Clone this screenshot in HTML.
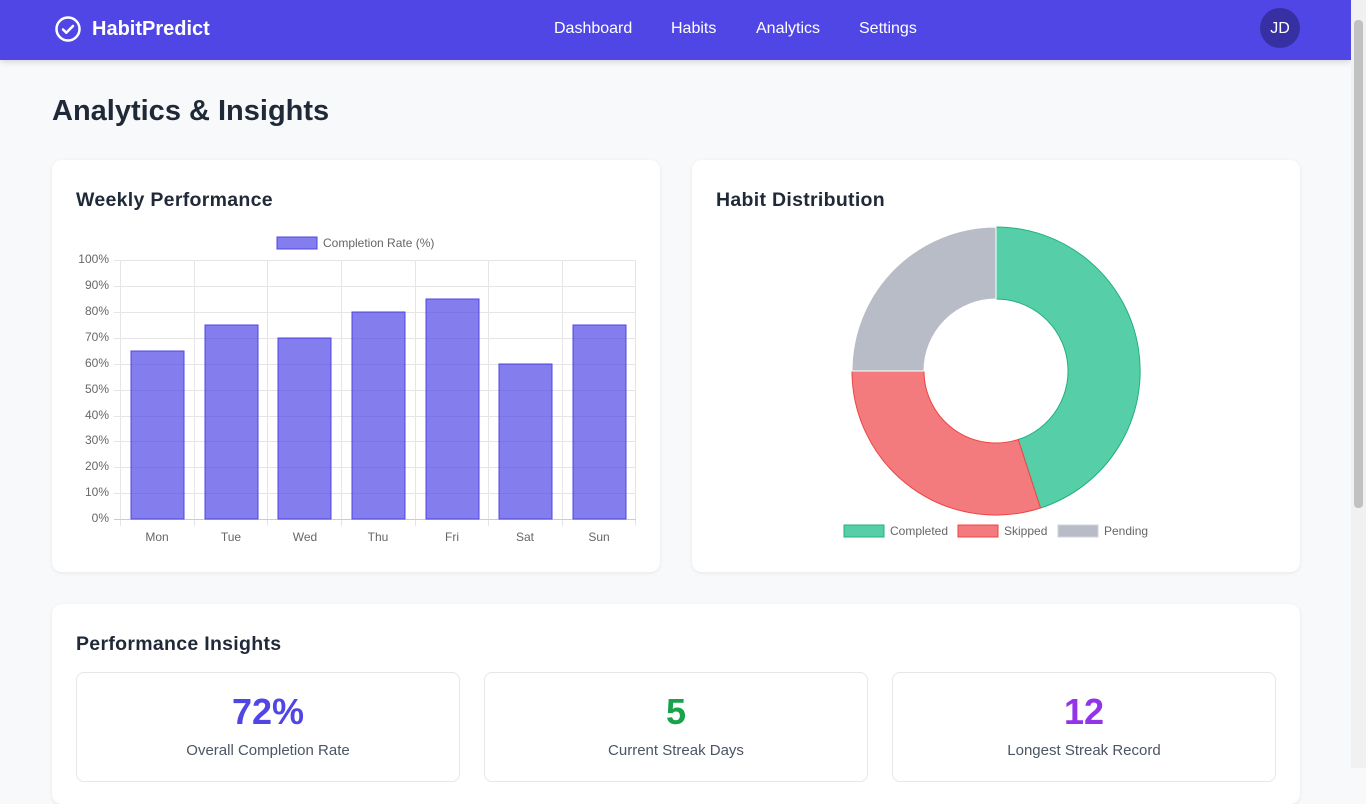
<!DOCTYPE html>
<html><head><meta charset="utf-8"><style>
*{box-sizing:border-box;margin:0;padding:0}
body{width:1366px;height:768px;overflow:hidden;background:#f8f9fb;font-family:"Liberation Sans","DejaVu Sans",sans-serif;color:#1f2937;position:relative}
.nav{position:absolute;left:0;top:0;width:1351px;height:60px;background:#4f46e5;box-shadow:0 2px 6px rgba(0,0,0,.15)}
.logo{position:absolute;left:92px;top:18px;color:#fff;font-weight:bold;font-size:20px}
.links a{position:absolute;top:20px;color:#fff;font-size:16px;text-decoration:none}
.av{position:absolute;left:1260px;top:8px;width:40px;height:40px;border-radius:50%;background:#3730a3;color:#fff;font-size:16px;text-align:center;line-height:42px}
.sb{position:absolute;left:1351px;top:0;width:15px;height:768px;background:#f1f1f1}
.sb div{position:absolute;left:3px;top:20px;width:9px;height:488px;background:#c1c1c1;border-radius:4px}
h1{position:absolute;left:52px;top:95px;font-size:29px;font-weight:bold;color:#1f2937}
.card{position:absolute;background:#fff;border-radius:10px;box-shadow:0 1px 4px rgba(0,0,0,.08)}
.card h2{position:absolute;left:24px;top:29px;font-size:19.5px;font-weight:bold;color:#1f2937;letter-spacing:.3px}
.st{position:absolute;top:672px;width:384px;height:110px;border:1px solid #e5e7eb;border-radius:8px;background:#fff;text-align:center}
.st b{display:block;margin-top:18px;font-size:36px;font-weight:bold}
.st span{display:block;margin-top:9px;font-size:15px;color:#4b5563}
svg text{font-family:"Liberation Sans",sans-serif}
</style></head><body>
<div class="nav">
<svg style="position:absolute;left:54px;top:15px" width="28" height="28" viewBox="0 0 28 28"><circle cx="14" cy="14" r="11.5" fill="none" stroke="#fff" stroke-width="2.5"/><path d="M9 14.5l3.3 3.2L19 11" fill="none" stroke="#fff" stroke-width="2.5" stroke-linecap="round" stroke-linejoin="round"/></svg>
<div class="logo">HabitPredict</div>
<div class="links"><a style="left:554px">Dashboard</a><a style="left:671px">Habits</a><a style="left:756px">Analytics</a><a style="left:859px">Settings</a></div>
<div class="av">JD</div>
</div>
<div class="sb"><div></div></div>
<h1>Analytics &amp; Insights</h1>
<div class="card" style="left:52px;top:160px;width:608px;height:412px"><h2>Weekly Performance</h2></div>
<div class="card" style="left:692px;top:160px;width:608px;height:412px"><h2>Habit Distribution</h2></div>
<div class="card" style="left:52px;top:604px;width:1248px;height:200px"><h2>Performance Insights</h2></div>
<svg style="position:absolute;left:0;top:0" width="1366" height="768">
<g stroke="#e5e5e5" stroke-width="1">
<line x1="114" y1="260.5" x2="636" y2="260.5"/><line x1="114" y1="286.5" x2="636" y2="286.5"/><line x1="114" y1="312.5" x2="636" y2="312.5"/><line x1="114" y1="338.5" x2="636" y2="338.5"/><line x1="114" y1="364.5" x2="636" y2="364.5"/><line x1="114" y1="390.5" x2="636" y2="390.5"/><line x1="114" y1="416.5" x2="636" y2="416.5"/><line x1="114" y1="441.5" x2="636" y2="441.5"/><line x1="114" y1="467.5" x2="636" y2="467.5"/><line x1="114" y1="493.5" x2="636" y2="493.5"/>
<line x1="120.5" y1="260" x2="120.5" y2="526"/><line x1="194.5" y1="260" x2="194.5" y2="526"/><line x1="267.5" y1="260" x2="267.5" y2="526"/><line x1="341.5" y1="260" x2="341.5" y2="526"/><line x1="415.5" y1="260" x2="415.5" y2="526"/><line x1="488.5" y1="260" x2="488.5" y2="526"/><line x1="562.5" y1="260" x2="562.5" y2="526"/><line x1="635.5" y1="260" x2="635.5" y2="526"/>
</g>
<line x1="114" y1="519.5" x2="636" y2="519.5" stroke="#ccc"/>
<g fill="rgba(79,70,229,0.7)" stroke="#4f46e5" stroke-width="1">
<rect x="131" y="351" width="53" height="168"/><rect x="205" y="325" width="53" height="194"/><rect x="278" y="338" width="53" height="181"/><rect x="352" y="312" width="53" height="207"/><rect x="426" y="299" width="53" height="220"/><rect x="499" y="364" width="53" height="155"/><rect x="573" y="325" width="53" height="194"/>
</g>
<rect x="277" y="237" width="40" height="12" fill="rgba(79,70,229,0.7)" stroke="#4f46e5"/>
<g font-size="12" fill="#666">
<text x="323" y="247">Completion Rate (%)</text>
<g text-anchor="end"><text x="109" y="263">100%</text><text x="109" y="289">90%</text><text x="109" y="315">80%</text><text x="109" y="341">70%</text><text x="109" y="367">60%</text><text x="109" y="393">50%</text><text x="109" y="419">40%</text><text x="109" y="444">30%</text><text x="109" y="470">20%</text><text x="109" y="496">10%</text><text x="109" y="522">0%</text></g>
<g text-anchor="middle"><text x="157" y="541">Mon</text><text x="231" y="541">Tue</text><text x="305" y="541">Wed</text><text x="378" y="541">Thu</text><text x="452" y="541">Fri</text><text x="525" y="541">Sat</text><text x="599" y="541">Sun</text></g>
</g>
<path d="M996,227 A144,144 0 0 1 1040.5,508 L1018.2,439.5 A72,72 0 0 0 996,299 Z" fill="#56cfa8" stroke="#22b07d"/>
<path d="M1040.5,508 A144,144 0 0 1 852,371 L924,371 A72,72 0 0 0 1018.2,439.5 Z" fill="#f37b7d" stroke="#ef4444"/>
<path d="M852,371 A144,144 0 0 1 996,227 L996,299 A72,72 0 0 0 924,371 Z" fill="#b8bcc6" stroke="#fff"/>
<rect x="844" y="525" width="40" height="12" fill="#56cfa8" stroke="#22b07d"/>
<rect x="958" y="525" width="40" height="12" fill="#f37b7d" stroke="#ef4444"/>
<rect x="1058" y="525" width="40" height="12" fill="#b8bcc6" stroke="#d0d3da"/>
<g font-size="12" fill="#666"><text x="890" y="535">Completed</text><text x="1004" y="535">Skipped</text><text x="1104" y="535">Pending</text></g>
</svg>
<div class="st" style="left:76px"><b style="color:#4f46e5">72%</b><span>Overall Completion Rate</span></div>
<div class="st" style="left:484px"><b style="color:#16a34a">5</b><span>Current Streak Days</span></div>
<div class="st" style="left:892px"><b style="color:#9333ea">12</b><span>Longest Streak Record</span></div>
</body></html>
